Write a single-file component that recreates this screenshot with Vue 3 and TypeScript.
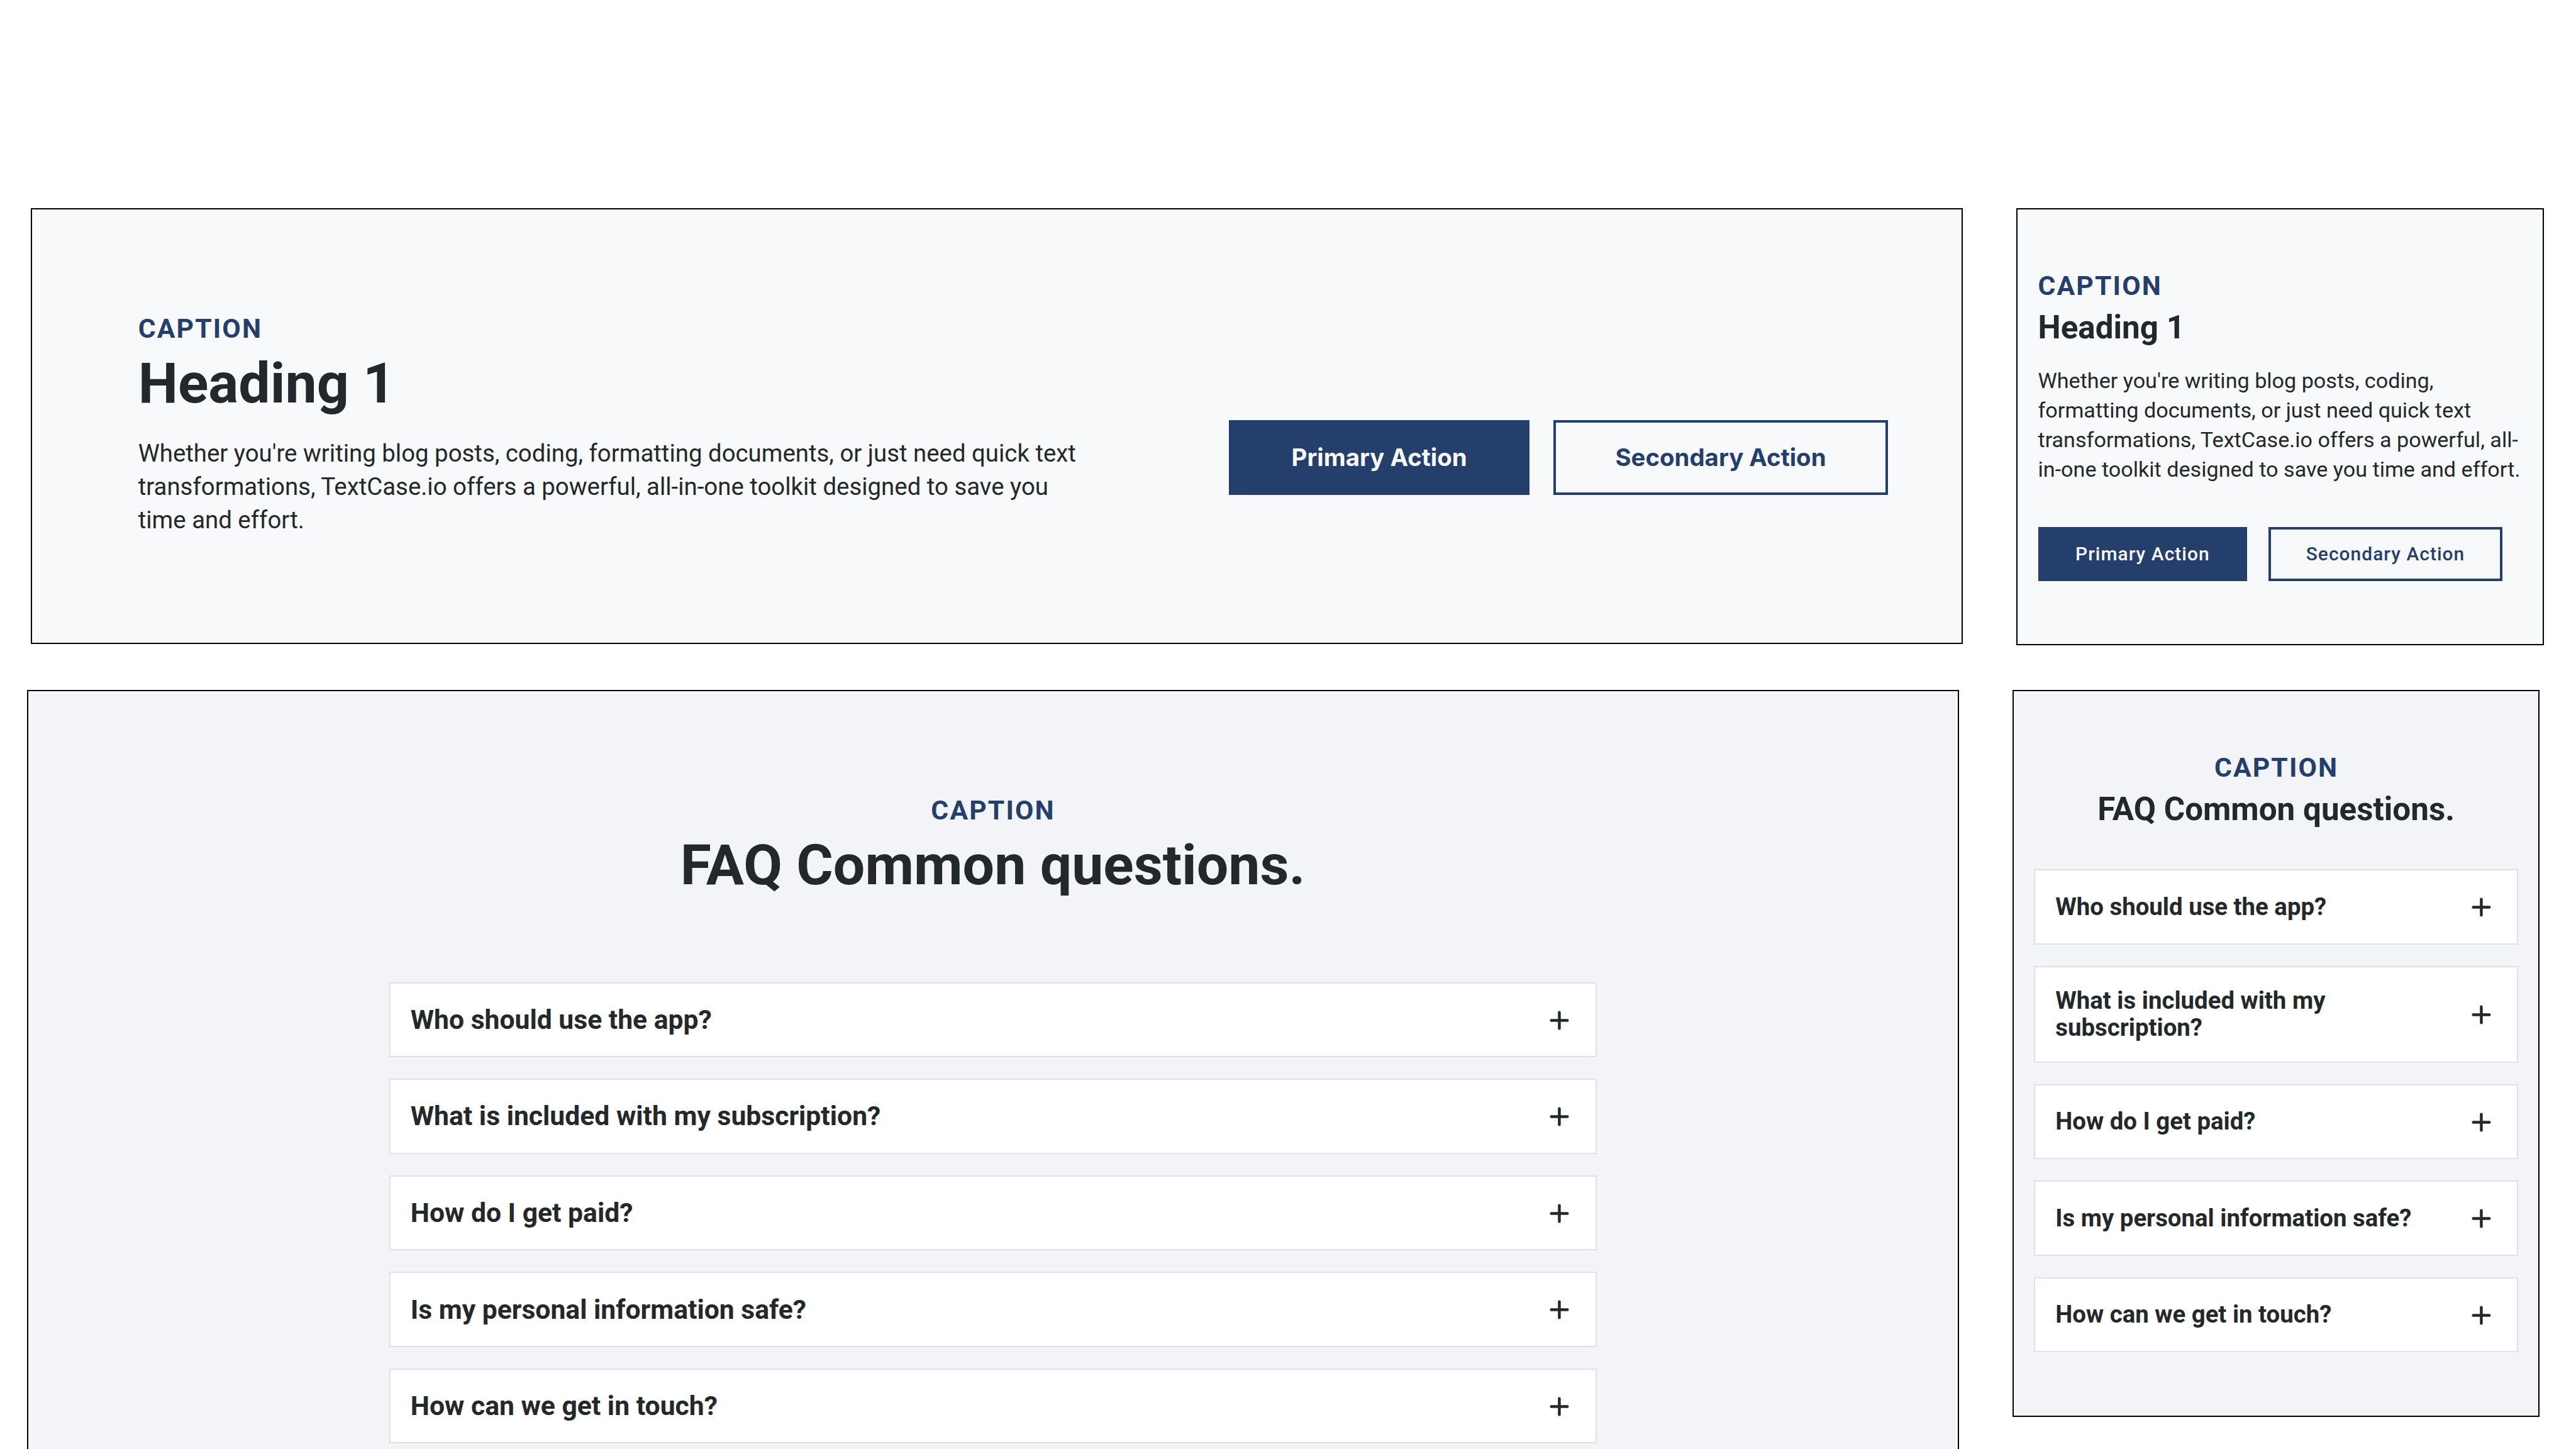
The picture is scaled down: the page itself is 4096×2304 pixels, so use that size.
<script setup lang="ts">
interface Panel {
  size: 'wide' | 'compact'
}

const panels: Panel[] = [{ size: 'wide' }, { size: 'compact' }]

const caption = 'CAPTION'
const intro =
  "Whether you're writing blog posts, coding, formatting documents, or just need quick text transformations, TextCase.io offers a powerful, all-in-one toolkit designed to save you time and effort."

const questions: string[] = [
  'Who should use the app?',
  'What is included with my subscription?',
  'How do I get paid?',
  'Is my personal information safe?',
  'How can we get in touch?',
]
</script>

<template>
  <main class="canvas">
    <div class="row row-hero">
      <section v-for="panel in panels" :key="panel.size" class="panel hero" :class="panel.size">
        <div class="copy">
          <p class="caption">{{ caption }}</p>
          <h1 class="title">Heading 1</h1>
          <p class="intro">{{ intro }}</p>
        </div>
        <div class="actions">
          <button type="button" class="btn primary">Primary Action</button>
          <button type="button" class="btn secondary">Secondary Action</button>
        </div>
      </section>
    </div>

    <div class="row row-faq">
      <section v-for="panel in panels" :key="panel.size" class="panel faq" :class="panel.size">
        <p class="caption">{{ caption }}</p>
        <h2 class="title">FAQ Common questions.</h2>
        <ul class="list">
          <li v-for="question in questions" :key="question" class="item">
            <span class="question">{{ question }}</span>
            <svg class="plus" viewBox="0 0 24 24" aria-hidden="true">
              <path d="M12.4 6.4V18.4M6.4 12.4H18.4" />
            </svg>
          </li>
        </ul>
      </section>
    </div>
  </main>
</template>

<style>
html,
body {
  margin: 0;
  background: #fff;
}
</style>

<style scoped>
.canvas {
  --navy: #243f6b;
  --ink: #22282b;
  /* 1px borders render as 2 device pixels at this zoom */
  --line: 0.9375px;
  box-sizing: border-box;
  width: 1920px;
  height: 1080px;
  padding-top: 155px;
  overflow: hidden;
  background: #fff;
  color: var(--ink);
  font-family: Roboto, "Liberation Sans", sans-serif;
  zoom: 2.133333;
}

.row {
  display: flex;
  align-items: flex-start;
  gap: 40px;
}

.row-hero {
  height: 326px;
  padding-left: 23px;
}

.row-faq {
  margin-top: 33px;
  padding-left: 20px;
}

.panel {
  box-sizing: border-box;
  flex: none;
  display: flex;
  border: 1px solid #000;
}

.panel.wide {
  width: 1440px;
}

.panel.compact {
  width: 393px;
}

.caption,
.title,
.intro {
  margin: 0;
}

.caption {
  color: var(--navy);
  font-size: 20px;
  font-weight: 700;
  line-height: 20px;
  letter-spacing: 1px;
}

.faq .caption {
  padding-left: 0.4px;
}

.title {
  margin-top: 8px;
  font-weight: 700;
}

.wide .title {
  font-size: 42px;
  line-height: 46px;
}

.compact .title {
  font-size: 24px;
  line-height: 26px;
}

/* Hero */
.hero {
  background: #f8f9fb;
}

.hero.wide {
  height: 325px;
  padding: calc(80px - var(--line)) calc(56px - var(--line)) calc(80px - var(--line)) calc(80px - var(--line));
  justify-content: space-between;
}

.hero.compact {
  height: 326px;
  padding: calc(48px - var(--line)) calc(16px - var(--line));
  flex-direction: column;
  gap: 32px;
}

.intro {
  margin-top: 16px;
}

.wide .intro {
  width: 712px;
  margin-top: 16.2px;
  font-size: 18px;
  line-height: 25px;
}

.compact .intro {
  font-size: 16px;
  line-height: 22px;
}

.actions {
  display: flex;
}

.wide .actions {
  gap: 18px;
  padding-top: 78px;
}

.compact .actions {
  gap: 16px;
}

.btn {
  box-sizing: border-box;
  display: flex;
  align-items: center;
  justify-content: center;
  padding: 0;
  border: 2px solid var(--navy);
  background: transparent;
  color: var(--navy);
  white-space: nowrap;
}

.btn.primary {
  background: var(--navy);
  color: #f8f9fb;
}

.wide .btn {
  height: 56px;
  font: 700 18px/22px Inter, "Liberation Sans", sans-serif;
}

.wide .primary {
  width: 224px;
}

.wide .secondary {
  width: 249px;
}

.compact .btn {
  height: 40px;
  font: 500 14px/16px Roboto, "Liberation Sans", sans-serif;
  letter-spacing: 0.5px;
}

.compact .primary {
  width: 156px;
}

.compact .secondary {
  width: 174px;
}

/* FAQ */
.faq {
  flex-direction: column;
  align-items: center;
  background: #f2f4f8;
}

.faq.wide {
  padding: calc(80px - var(--line)) 0;
}

.faq.compact {
  padding: calc(48px - var(--line)) calc(16px - var(--line));
}

.list {
  display: flex;
  flex-direction: column;
  gap: 16px;
  margin: 64px 0 0;
  padding: 0;
  list-style: none;
}

.wide .list {
  width: 900px;
}

.compact .list {
  width: 361px;
  margin-top: 32px;
}

.item {
  display: flex;
  align-items: center;
  justify-content: space-between;
  padding: calc(16px - var(--line));
  border: 1px solid #dee1e6;
  background: #fff;
}

.question {
  font-weight: 700;
}

.wide .question {
  font-size: 20px;
  line-height: 22px;
}

.compact .question {
  max-width: 273px;
  font-size: 18px;
  line-height: 20px;
}

.plus {
  flex: none;
  width: 24px;
  height: 24px;
  fill: none;
  stroke: var(--ink);
  stroke-width: 2.1;
  stroke-linecap: round;
}
</style>
